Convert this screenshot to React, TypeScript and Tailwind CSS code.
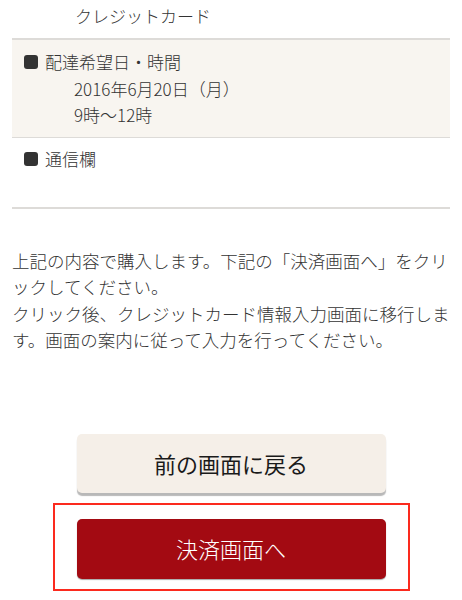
export default function App() {
  const jp = { fontFamily: '"Noto Sans CJK JP", "Noto Sans", sans-serif' };

  return (
    <main style={jp} className="w-full min-h-screen bg-white text-[#333] font-light overflow-hidden">
      {/* 支払い方法の続き */}
      <div className="px-3">
        <div className="pt-[3px] pb-[8.5px] pl-[63px] text-[17px] leading-[26.5px]">
          クレジットカード
        </div>

        <div className="border-t-2 border-b-[1.5px] border-[#dddbd8] bg-[#f8f5f0] pt-[9px] pb-[8px] text-[17px] leading-[26.5px]">
          <div className="flex items-center gap-[7px] pl-3">
            <span className="w-[14px] h-[14px] rounded-[3px] bg-[#333]" />
            <span>配達希望日・時間</span>
          </div>
          <div className="pl-[62px]">2016年6月20日（月）</div>
          <div className="pl-[62px]">9時〜12時</div>
        </div>

        <div className="border-b-2 border-[#dddbd8] pt-[8px] pb-[34.5px] text-[17px] leading-[26.5px]">
          <div className="flex items-center gap-[7px] pl-3">
            <span className="w-[14px] h-[14px] rounded-[3px] bg-[#333]" />
            <span>通信欄</span>
          </div>
        </div>

        <p className="mt-[39px] text-[17.5px] leading-[26.5px]">
          上記の内容で購入します。下記の「決済画面へ」をクリックしてください。
          <br />
          クリック後、クレジットカード情報入力画面に移行します。画面の案内に従って入力を行ってください。
        </p>
      </div>

      <div className="flex flex-col items-center mt-[80px]">
        <button className="w-[309px] h-[59px] rounded-[5px] bg-[#f5efe8] text-[22px] text-[#1a1a1a] font-normal shadow-[0_3px_1px_rgba(0,0,0,0.28)]">
          前の画面に戻る
        </button>

        <div className="mt-[10px] w-[357px] border-2 border-[#fb2a1e] pt-[14px] pb-[10px] flex justify-center">
          <button className="w-[309px] h-[60px] rounded-[5px] bg-[#a30a12] text-[22px] text-white shadow-[0_1px_1px_rgba(0,0,0,0.35)]">
            決済画面へ
          </button>
        </div>
      </div>
    </main>
  );
}
